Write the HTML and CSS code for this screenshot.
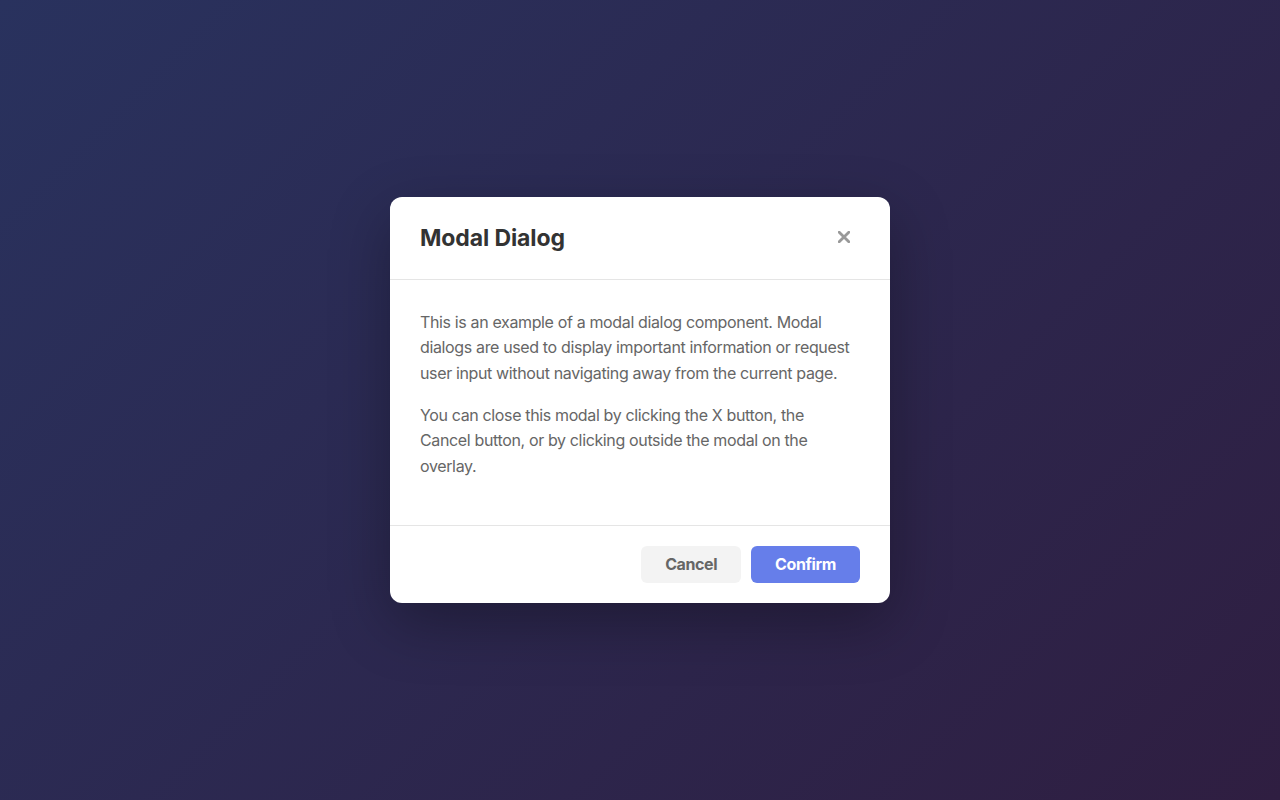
FILE: index.html
```html
<!DOCTYPE html>
<html lang="en">
<head>
<meta charset="utf-8">
<title>Modal Dialog</title>
<link rel="stylesheet" href="styles.css">
</head>
<body>
<div class="overlay">
  <div class="modal">
    <div class="modal-header">
      <h2 class="modal-title">Modal Dialog</h2>
      <button class="close-btn" aria-label="Close">
        <svg width="12" height="12" viewBox="0 0 12 12"><path d="M1.2 1.2L10.8 10.8M10.8 1.2L1.2 10.8" stroke="#999" stroke-width="2.8" stroke-linecap="round"/></svg>
      </button>
    </div>
    <div class="modal-body">
      <p>This is an example of a modal dialog component. Modal dialogs are used to display important information or request user input without navigating away from the current page.</p>
      <p>You can close this modal by clicking the X button, the Cancel button, or by clicking outside the modal on the overlay.</p>
    </div>
    <div class="modal-footer">
      <button class="btn btn-cancel">Cancel</button>
      <button class="btn btn-confirm">Confirm</button>
    </div>
  </div>
</div>
</body>
</html>
```
FILE: styles.css
```css
* { box-sizing: border-box; }
html, body { margin: 0; padding: 0; height: 100%; }
body {
  font-family: Inter, "Noto Sans", "Liberation Sans", sans-serif;
  background: linear-gradient(135deg, #29325e 0%, #2f1e41 100%);
}
.overlay {
  width: 100%;
  height: 100vh;
  display: flex;
  align-items: center;
  justify-content: center;
}
.modal {
  width: 500px;
  background: #fff;
  border-radius: 12px;
  box-shadow: 0 20px 60px rgba(0, 0, 0, 0.3);
  overflow: hidden;
}
.modal-header {
  display: flex;
  align-items: center;
  justify-content: space-between;
  padding: 25px 30px 23px;
  border-bottom: 1px solid #e5e5e5;
  height: 83px;
}
.modal-title {
  margin: 0;
  font-size: 23px;
  font-weight: 700;
  letter-spacing: -0.1px;
  color: #333;
  line-height: 1.5;
}
.close-btn {
  border: none;
  background: none;
  padding: 0;
  width: 32px;
  height: 32px;
  display: flex;
  align-items: center;
  justify-content: center;
  margin-top: -4px;
  cursor: pointer;
}
.modal-body {
  padding: 30px 35px 30px 30px;
  border-bottom: 1px solid #e5e5e5;
}
.modal-body p {
  margin: 0 0 16px 0;
  font-size: 16px;
  line-height: 1.6;
  letter-spacing: -0.36px;
  color: #666;
}
.modal-footer {
  display: flex;
  justify-content: flex-end;
  gap: 10px;
  padding: 20px 30px;
}
.btn {
  border: none;
  border-radius: 6px;
  font-family: inherit;
  font-size: 16px;
  font-weight: 700;
  letter-spacing: -0.4px;
  line-height: 17px;
  padding: 10px 24px;
  cursor: pointer;
}
.btn-cancel {
  background: #f3f3f3;
  color: #666;
}
.btn-confirm {
  background: #667eea;
  color: #fff;
}
```
